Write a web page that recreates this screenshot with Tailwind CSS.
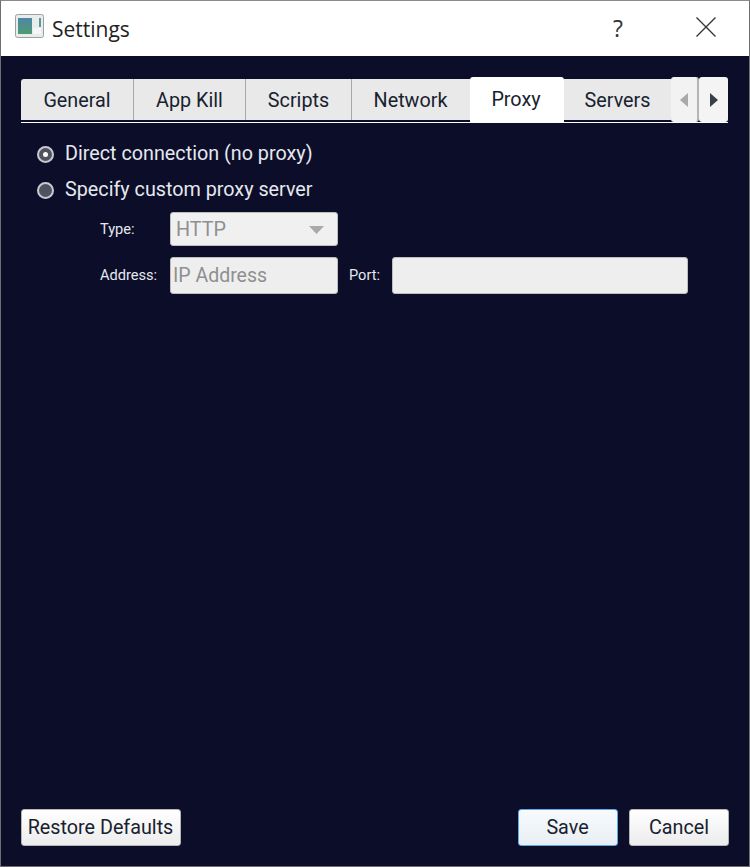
<!DOCTYPE html>
<html>
  <head>
    <meta charset="UTF-8" />
    <script src="https://cdn.jsdelivr.net/npm/@tailwindcss/browser@4"></script>
    <title>Settings</title>
  </head>
  <body class="bg-[#0b0d29]">
    <div class="w-[750px] h-[867px] flex flex-col border border-[#6e6e6e] border-t-[#8a8a8a] overflow-hidden font-['Roboto',sans-serif]">

      <!-- title bar -->
      <div class="h-[55px] shrink-0 bg-white flex items-center pl-[14px]">
        <svg width="30" height="25" viewBox="0 0 30 25" class="mb-[4px]">
          <defs>
            <linearGradient id="screen" x1="0" y1="0" x2="0" y2="1">
              <stop offset="0" stop-color="#4f86a8" />
              <stop offset="1" stop-color="#4f9a70" />
            </linearGradient>
          </defs>
          <rect x="0.5" y="0.5" width="28" height="23" rx="2" fill="#e8ecec" stroke="#9aa0a4" />
          <rect x="3" y="4" width="14" height="16" fill="url(#screen)" />
          <rect x="18" y="14" width="8" height="6" fill="#f6f6f6" />
          <rect x="24" y="4" width="2" height="9" fill="#5a9a90" />
        </svg>
        <span class="ml-[7px] mt-[3px] text-[21px] text-[#222] font-['Open_Sans',sans-serif]">Settings</span>
        <span class="ml-auto mr-[73px] text-[23px] text-[#333] font-['Open_Sans',sans-serif]">?</span>
        <svg width="20" height="20" viewBox="0 0 20 20" class="mr-[33px] mb-[3px]">
          <path d="M0.5 0.5 L19.5 19.5 M19.5 0.5 L0.5 19.5" stroke="#333" stroke-width="1.3" fill="none" />
        </svg>
      </div>

      <!-- tabs -->
      <div class="ml-[20px] mr-[21px] mt-[21px] h-[46px] shrink-0 flex items-end border-b border-white text-[19.75px] text-[#18222f] relative">
        <div class="w-[113px] h-[41px] mb-[2px] pt-[2px] flex items-center justify-center bg-[#e9e9e9] border-r border-[#a8a8a8] rounded-tl-[3px]">General</div>
        <div class="w-[112px] h-[41px] mb-[2px] pt-[2px] flex items-center justify-center bg-[#e9e9e9] border-r border-[#a8a8a8]">App Kill</div>
        <div class="w-[106px] h-[41px] mb-[2px] pt-[2px] flex items-center justify-center bg-[#e9e9e9] border-r border-[#a8a8a8]">Scripts</div>
        <div class="w-[118px] h-[41px] mb-[2px] pt-[2px] pr-[1px] flex items-center justify-center bg-[#e9e9e9]">Network</div>
        <div class="w-[94px] h-[45px] pr-[2px] flex items-center justify-center bg-white rounded-t-[3px]">Proxy</div>
        <div class="w-[107px] h-[41px] mb-[2px] pt-[2px] flex items-center justify-center bg-[#e9e9e9]">Servers</div>
        <div class="w-[28px] h-[45px] flex items-center justify-center bg-[#f2f2f2] border-r-2 border-[#b5b5b5] rounded-[3px]">
          <svg width="9" height="14" viewBox="0 0 9 14"><path d="M8 0 V14 L0 7 Z" fill="#a9a9a9" /></svg>
        </div>
        <div class="w-[29px] h-[45px] flex items-center justify-center bg-[#f4f4f4] rounded-[3px]">
          <svg width="9" height="14" viewBox="0 0 9 14"><path d="M1 0 V14 L9 7 Z" fill="#3a3f47" /></svg>
        </div>
      </div>

      <!-- proxy page -->
      <div class="flex-1 pl-[36px] pt-[17px] text-white">
        <div class="flex items-center h-[28px] text-[19.75px] text-[#e6e8ee]">
          <span class="w-[17px] h-[17px] rounded-full bg-[#50525f] border-2 border-[#c9cad0] flex items-center justify-center">
            <span class="w-[5px] h-[5px] rounded-full bg-white"></span>
          </span>
          <span class="ml-[11px]">Direct connection (no proxy)</span>
        </div>
        <div class="flex items-center h-[28px] mt-[8px] text-[19.75px] text-[#e6e8ee]">
          <span class="w-[17px] h-[17px] rounded-full bg-[#50525f] border-2 border-[#c9cad0]"></span>
          <span class="ml-[11px]">Specify custom proxy server</span>
        </div>

        <div class="mt-[8px] ml-[63px] flex items-center h-[34px] text-[14.6px] text-[#e6e8ee]">
          <span class="w-[70px] pt-[1px]">Type:</span>
          <div class="w-[168px] h-[34px] flex items-center justify-between pl-[5px] pr-[13px] pt-[1px] rounded-[3px] bg-[#f0f0f0] border border-[#bdbdbd] text-[19.75px] text-[#8f8f8f]">
            HTTP
            <svg width="15" height="8" viewBox="0 0 15 8"><path d="M0 0 H15 L7.5 8 Z" fill="#a9a9a9" /></svg>
          </div>
        </div>
        <div class="mt-[11px] ml-[63px] flex items-center h-[37px] text-[14.6px] text-[#e6e8ee]">
          <span class="w-[70px]">Address:</span>
          <div class="w-[168px] h-[37px] flex items-center pl-[2px] pt-[1px] rounded-[3px] bg-[#eeeeee] border border-[#bdbdbd] text-[19.5px] text-[#8f8f8f]">IP Address</div>
          <span class="ml-[11px] w-[43px]">Port:</span>
          <div class="w-[296px] h-[37px] rounded-[3px] bg-[#eeeeee] border border-[#bdbdbd]"></div>
        </div>
      </div>

      <!-- bottom buttons -->
      <div class="h-[37px] mb-[20px] shrink-0 ml-[20px] mr-[20px] flex text-[19.75px] text-[#18222f]">
        <button class="w-[160px] h-[37px] pr-[1px] rounded-[3px] bg-gradient-to-b from-white to-[#ececec] border border-[#b5b5b5]">Restore Defaults</button>
        <button class="ml-auto w-[100px] h-[37px] pr-[1px] rounded-[3px] bg-gradient-to-b from-[#f7fbfe] to-[#e8eef3] border border-[#5aa9e6]">Save</button>
        <button class="ml-[11px] w-[100px] h-[37px] rounded-[3px] bg-gradient-to-b from-white to-[#ececec] border border-[#b5b5b5]">Cancel</button>
      </div>
    </div>
  </body>
</html>
